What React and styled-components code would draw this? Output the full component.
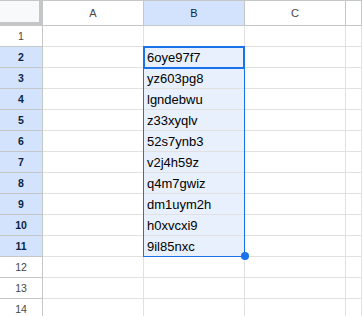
import React from "react";
import styled, { createGlobalStyle } from "styled-components";

const Global = createGlobalStyle`
  html, body { margin: 0; padding: 0; background: #ffffff; }
  body { font-family: Arial, "Liberation Sans", sans-serif; }
`;

const Sheet = styled.div`
  position: relative;
  width: 362px;
  height: 316px;
  overflow: hidden;
  border-top: 1px solid #c4c7c5;
  box-sizing: border-box;
  display: grid;
  grid-template-columns: 43px 101px 101px 101px 1fr;
  grid-template-rows: 25px repeat(14, 21px);
  grid-auto-rows: 21px;
`;

const Corner = styled.div`
  box-sizing: border-box;
  background: #f8f9fa;
  border-right: 1px solid #c4c7c5;
  border-bottom: 1px solid #c4c7c5;
  position: relative;
  &::after {
    content: "";
    position: absolute;
    right: 0;
    top: 0;
    width: 3px;
    height: 100%;
    background: #c4c7c5;
  }
  &::before {
    content: "";
    position: absolute;
    left: 0;
    bottom: 0;
    height: 3px;
    width: 100%;
    background: #c4c7c5;
  }
`;

const ColHead = styled.div`
  box-sizing: border-box;
  border-right: 1px solid #c4c7c5;
  border-bottom: 1px solid #c4c7c5;
  background: ${(p) => (p.$active ? "#d3e3fd" : "#ffffff")};
  color: ${(p) => (p.$active ? "#0b1f45" : "#444746")};
  font-size: 11px;
  display: flex;
  align-items: center;
  justify-content: center;
`;

const RowHead = styled.div`
  box-sizing: border-box;
  border-right: 1px solid #c4c7c5;
  border-bottom: 1px solid #c4c7c5;
  background: ${(p) => (p.$active ? "#d3e3fd" : "#ffffff")};
  color: ${(p) => (p.$active ? "#0b1f45" : "#444746")};
  font-weight: ${(p) => (p.$active ? 700 : 400)};
  font-size: 10.5px;
  display: flex;
  align-items: center;
  justify-content: center;
`;

const Cell = styled.div`
  box-sizing: border-box;
  border-right: 1px solid #e1e1e1;
  border-bottom: 1px solid #e1e1e1;
  background: ${(p) => (p.$selected ? "#e8f0fd" : "#ffffff")};
  color: #000000;
  font-size: 13px;
  padding: 0 3px;
  display: flex;
  align-items: center;
  white-space: nowrap;
  overflow: hidden;
`;

const RangeBox = styled.div`
  position: absolute;
  left: 143px;
  top: 45px;
  width: 102px;
  height: 211px;
  box-sizing: border-box;
  border: 1px solid #1a73e8;
  pointer-events: none;
`;

const ActiveBox = styled.div`
  position: absolute;
  left: 143px;
  top: 45px;
  width: 102px;
  height: 23px;
  box-sizing: border-box;
  border: 2px solid #1a73e8;
  pointer-events: none;
`;

const Handle = styled.div`
  position: absolute;
  left: 241px;
  top: 251px;
  width: 8px;
  height: 8px;
  border-radius: 50%;
  background: #1a73e8;
  pointer-events: none;
`;

const values = [
  "6oye97f7",
  "yz603pg8",
  "lgndebwu",
  "z33xyqlv",
  "52s7ynb3",
  "v2j4h59z",
  "q4m7gwiz",
  "dm1uym2h",
  "h0xvcxi9",
  "9il85nxc",
];

export default function App() {
  const rows = [];
  for (let r = 1; r <= 14; r++) {
    const val = r >= 2 && r <= 11 ? values[r - 2] : "";
    const sel = r >= 2 && r <= 11;
    rows.push(
      <React.Fragment key={r}>
        <RowHead $active={sel}>{r}</RowHead>
        <Cell />
        <Cell $selected={sel}>{val}</Cell>
        <Cell />
        <Cell />
      </React.Fragment>
    );
  }
  return (
    <>
      <Global />
      <Sheet>
        <Corner />
        <ColHead>A</ColHead>
        <ColHead $active>B</ColHead>
        <ColHead>C</ColHead>
        <ColHead />
        {rows}
        <RangeBox />
        <ActiveBox />
        <Handle />
      </Sheet>
    </>
  );
}
